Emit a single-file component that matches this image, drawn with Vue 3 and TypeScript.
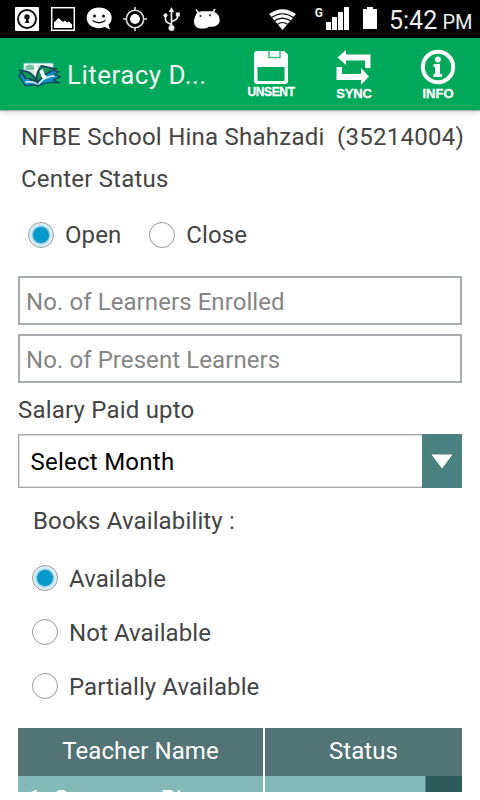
<script setup lang="ts">
import { ref } from 'vue'

const status = ref('Open')
const books = ref('Available')
const statusOptions: string[] = ['Open', 'Close']
const bookOptions: string[] = ['Available', 'Not Available', 'Partially Available']
const fields: string[] = ['No. of Learners Enrolled', 'No. of Present Learners']
</script>

<template>
  <div class="screen">
    <header class="statusbar">
      <svg class="notifications" width="240" height="38" viewBox="0 0 240 38">
        <rect x="15" y="7" width="24" height="24" rx="1" fill="#fff" />
        <circle cx="27" cy="19" r="9" fill="none" stroke="#111" stroke-width="2" />
        <circle cx="27" cy="17" r="2.7" fill="#111" />
        <path d="M26 18h2.500v3l1 2h-5l1.500-2z" fill="#111" />
        <rect x="51.700" y="7.700" width="22.600" height="22.600" fill="none" stroke="#fff" stroke-width="1.500" />
        <path d="M54 28v-5.500l4.500-4.500 4.500 4 2-1.500 2 2 2-1 3 3v3.500z" fill="#fff" />
        <path d="M99 7.500c7.500 0 12.700 4.600 12.700 10.300 0 3-1.200 5.200-3.200 7l1.500 4.700-5.200-2.400c-1.700.7-3.700 1.100-5.800 1.100-7.300 0-12.300-4.400-12.300-10.400S91.700 7.500 99 7.500z" fill="#fff" />
        <circle cx="94.500" cy="16" r="1.500" fill="#111" />
        <circle cx="103.500" cy="16" r="1.500" fill="#111" />
        <path d="M92.500 20.500q6.500 4.500 13 0" fill="none" stroke="#111" stroke-width="1.500" />
        <circle cx="135" cy="19" r="8.700" fill="none" stroke="#ddd" stroke-width="1.600" />
        <circle cx="135" cy="19" r="5" fill="#fff" />
        <path d="M135 7v4M135 27v4M123 19h4M143 19h4" stroke="#ddd" stroke-width="1.600" />
        <path d="M171.500 11v16M171.500 24.500q-6-2-6-5v-4M171.500 21.500q6.300-1.500 6.300-6" fill="none" stroke="#eee" stroke-width="1.700" />
        <path d="M171.500 7l2.700 5h-5.400z" fill="#eee" />
        <circle cx="171.500" cy="28" r="3" fill="#eee" />
        <circle cx="165.500" cy="15.300" r="2" fill="#eee" />
        <rect x="175.800" y="12.500" width="4" height="4" fill="#eee" />
        <path d="M198.500 13l-2.500-3.500M212.500 13l2.500-4" stroke="#eee" stroke-width="1.600" />
        <path d="M194 21c0-2 .8-3 1.200-4.500.8-3.500 3-5.200 6.500-5.300h9c4.500 0 9 3.800 9 8.800 0 4-3 6.500-7.500 6.800-2.500 0-3-.3-4.500.6-1.500 1-4 1.400-7.500 1.100-4-.4-6.200-3-6.200-7.500z" fill="#fff" />
        <circle cx="200.500" cy="16" r="1.100" fill="#222" />
        <circle cx="210" cy="15.300" r="1.100" fill="#222" />
      </svg>
      <svg class="signals" width="140" height="38" viewBox="240 0 140 38">
        <path d="M269 14q13.500-9.500 27 0L282.500 30z" fill="#fff" />
        <path d="M271.500 17.500q11-7.500 22 0M274.500 20.800q8-5.300 16 0M277.500 24.200q5-3.400 10 0" fill="none" stroke="#000" stroke-width="1.100" />
        <text x="314.800" y="16.800" class="network">G</text>
        <path d="M326 22h5v8h-5zM332 17h5v13h-5zM338 12h5v18h-5zM344 7h5v23h-5z" fill="#fff" />
        <path d="M367 7h6v2h4v20h-14V9h4z" fill="#fff" />
      </svg>
      <span class="clock">5:42 <small>PM</small></span>
    </header>

    <nav class="appbar">
      <svg class="logo" width="43" height="28" viewBox="0 0 40 28" preserveAspectRatio="none">
        <rect x="5" y="1" width="28" height="19" rx="1.500" fill="#f3fbf5" stroke="#4fb7b0" />
        <path d="M7 4q4-3 8 0v4H7z" fill="#75c6a0" />
        <path d="M7 10h8M18 4h9" stroke="#8bcbb1" />
        <path d="M3 10l-2 4 6 10q7-2 12 0 8-5 20-3l-6-3 6-3-5-3 4-2-13-4-7 15-6-3z" fill="#168fc9" stroke="#12445a" stroke-width="1.300" />
        <path d="M8 17q7-1 11 5 6-8 15-8M7 20q7-1 11 2" fill="none" stroke="#eafaf4" stroke-width="1.500" />
        <path d="M2 8.500q12 0 16 12-5-4-11-4zM17 19q0-10 5-15l13 3q-8 3-17 13z" fill="#16945b" stroke="#12445a" stroke-width="1.600" />
        <path d="M20 9l3-2 2 6 2 1-4 3-1-2z" fill="#fff" />
      </svg>
      <h1>Literacy D...</h1>
      <div class="actions">
        <button class="unsent">
          <svg width="34" height="34" viewBox="0 0 34 34">
            <path d="M2 0h28l4 3.500V30a3 3 0 0 1-3 3H3a3 3 0 0 1-3-3V3a3 3 0 0 1 2-3z" fill="#fff" />
            <path d="M15 0v6.500h11V0" fill="none" stroke="#3fbd82" stroke-width="1.500" />
            <path d="M3.500 16h27v13a1 1 0 0 1-1 1h-25a1 1 0 0 1-1-1z" fill="#00a859" />
          </svg>
          <span>UNSENT</span>
        </button>
        <button class="sync">
          <svg width="36" height="36" viewBox="0 0 36 36">
            <path d="M1.500 7.500L10 0v4.500h24.500V18H29v-7.500H10v4.500zM.500 17H6v7h19v-6l8 8.500-8 8.500v-5H.500z" fill="#fff" />
          </svg>
          <span>SYNC</span>
        </button>
        <button class="info">
          <svg width="36" height="36" viewBox="0 0 36 36">
            <circle cx="18" cy="18" r="15.200" fill="none" stroke="#fff" stroke-width="4" />
            <circle cx="18" cy="10.500" r="2.900" fill="#fff" />
            <path d="M13.500 15H20v10h2v3h-8.500v-3H15v-7h-1.500z" fill="#fff" />
          </svg>
          <span>INFO</span>
        </button>
      </div>
    </nav>

    <main>
      <p class="school">NFBE School Hina Shahzadi&nbsp; (35214004)</p>
      <p class="center">Center Status</p>
      <div class="choices">
        <label v-for="o in statusOptions" :key="o" class="choice" @click="status = o">
          <i class="radio" :class="{ on: status === o }"></i><span>{{ o }}</span>
        </label>
      </div>
      <div class="fields">
        <input v-for="f in fields" :key="f" type="text" :placeholder="f" />
      </div>
      <p class="salary">Salary Paid upto</p>
      <div class="select">
        <span>Select Month</span>
        <div class="arrow"><svg width="22" height="15" viewBox="0 0 22 15"><path d="M.500 .500h21L11 14.500z" fill="#fff" /></svg></div>
      </div>
      <p class="books">Books Availability :</p>
      <div class="booklist">
        <label v-for="o in bookOptions" :key="o" class="choice" @click="books = o">
          <i class="radio" :class="{ on: books === o }"></i><span>{{ o }}</span>
        </label>
      </div>
      <div class="table">
        <div class="th">Teacher Name</div>
        <div class="th">Status</div>
        <div class="td">1. Sameena Bi...</div>
        <div class="td last"><i></i></div>
      </div>
    </main>
  </div>
</template>

<style>
body { margin: 0; background: #fff; overflow: hidden; }
</style>

<style scoped>
.screen { width: 480px; height: 800px; overflow: hidden; background: #fff; font-family: Roboto, "Liberation Sans", sans-serif; font-size: 24px; letter-spacing: 0.08px; color: #444; }
.statusbar { height: 38px; background: #000; display: flex; align-items: center; color: #fff; }
.network { font: bold 12px Roboto, sans-serif; fill: #eee; }
.clock { font-size: 25px; letter-spacing: 0; padding: 3px 0 0 9px; white-space: nowrap; color: #eee; }
.clock small { font-size: 20px; letter-spacing: 0; margin-left: -1px; }
.appbar { height: 72px; background: #00a859; display: flex; align-items: center; box-shadow: 0 1px 1px #aaa, 0 2px 7px rgba(0, 0, 0, 0.15); }
.logo { flex: none; margin: 3px 6px 0 18px; }
h1 { flex: none; margin: 1px 0 0; font-size: 26px; font-weight: 400; color: #f3f3f3; letter-spacing: 0.45px; width: 152px; white-space: nowrap; }
.actions { display: flex; align-self: stretch; align-items: flex-start; }
button { border: 0; background: none; padding: 12px 0 0; display: flex; flex: none; flex-direction: column; align-items: center; color: #fff; font: bold 12.500px/15px "Liberation Sans", sans-serif; }
button span { -webkit-text-stroke: 0.3px #fff; }
.unsent { width: 104px; padding-top: 13px; }
.unsent span { font-size: 12px; letter-spacing: -0.35px; }
.sync { width: 62px; }
.info { width: 106px; padding-top: 11px; }
button svg { display: block; flex: none; }
.sync span { font-size: 13px; letter-spacing: -0.2px; }
.info span { font-size: 13px; margin-top: 1px; }
main { padding: 0 18px; }
p { margin: 0; white-space: pre; height: 42px; line-height: 42px; }
.school { padding: 6px 0 0 3px; letter-spacing: 0.25px; }
.center { padding-left: 3px; letter-spacing: 0.2px; }
.choices { display: flex; gap: 28px; padding: 12px 0 0 10px; height: 64px; }
.choice { display: flex; align-items: center; height: 46px; gap: 11px; }
.radio { box-sizing: content-box; width: 24px; height: 24px; flex: none; border: 1.500px solid #999; border-radius: 50%; background: #fff; }
.radio.on { background: radial-gradient(circle, #0899cc 0 7.400px, #5baecb 8px, #b5e2f4 9px, #eef7fa 12px); }
.fields { display: flex; flex-direction: column; gap: 9px; }
input { box-sizing: border-box; width: 444px; height: 49px; border: 2px solid #a9adb1; border-radius: 0; padding: 2px 6px 0; font: inherit; letter-spacing: inherit; outline: none; background: #fff; }
input::placeholder { color: #858585; opacity: 1; }
.salary { height: 51px; line-height: 54px; letter-spacing: 0.2px; }
.select { height: 54px; display: flex; align-items: center; justify-content: space-between; box-sizing: border-box; border: 1px solid #a5a8aa; box-shadow: inset 0 0 0 1px #ddd; color: #000; padding-left: 11.500px; letter-spacing: 0.25px; }
.select span { padding-top: 1px; }
.arrow { width: 40px; height: 54px; flex: none; margin-right: -1px; background: #498281; display: flex; align-items: center; justify-content: center; padding-top: 1px; box-sizing: border-box; }
.books { height: 63px; line-height: 67px; padding-left: 15px; letter-spacing: 0.14px; }
.booklist { padding-left: 14px; height: 177px; }
.booklist .choice { height: 54px; }
.booklist span { padding-top: 1px; }
.table { display: grid; grid-template-columns: 245px 197px; grid-template-rows: 48px 16px; column-gap: 2px; overflow: hidden; color: #fff; }
.th { background: #527475; text-align: center; line-height: 47px; }
.td { background: #84b9ba; padding-left: 10px; overflow: hidden; line-height: 46px; white-space: nowrap; }
.td.last { display: flex; justify-content: flex-end; padding: 0; }
.td.last i { width: 36px; border-left: 1px solid #568b8b; background: #2e5b5b; }
</style>
